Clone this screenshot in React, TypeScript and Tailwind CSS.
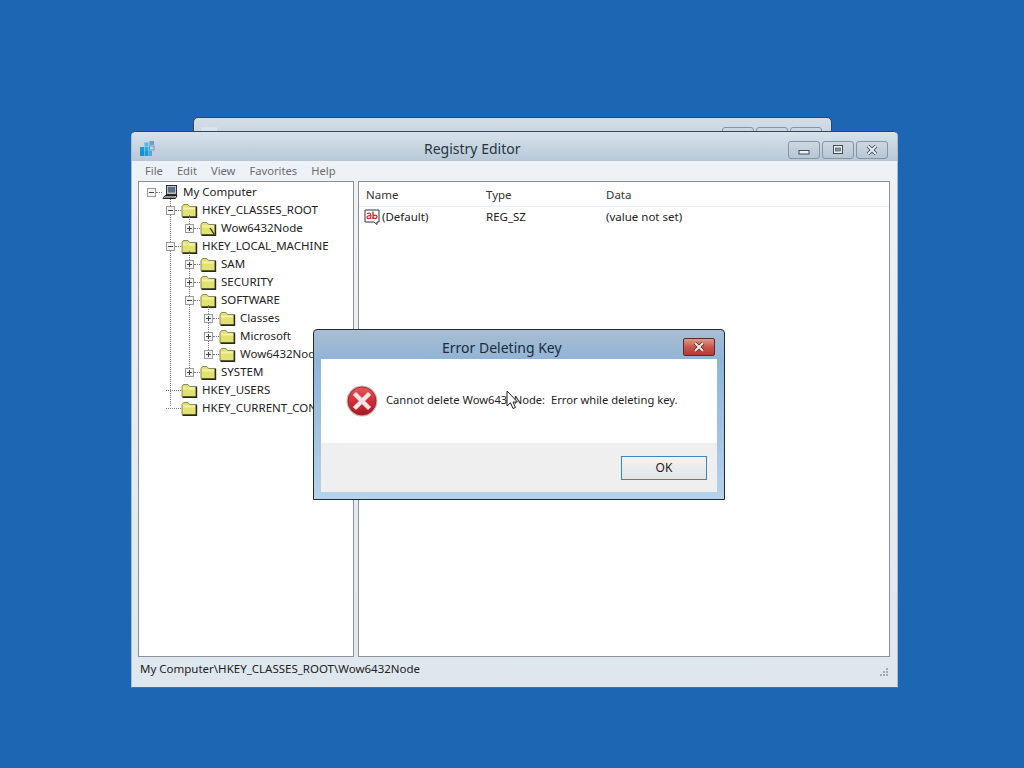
import React from "react";

const Folder = ({ open = false }: { open?: boolean }) => (
  <svg width="17" height="15" viewBox="0 0 17 15" className="shrink-0">
    <path d="M1 3.5 L2.5 1.5 H7 L8.5 3.5 H15 V13.5 H1 Z" fill="#e2e26e" stroke="#8a8a5a" strokeWidth="1" />
    <path d="M2 4.5 H14 V6.5 H2 Z" fill="#f2f2ac" />
    <path d="M15.5 3.5 V14.2 H1.5" fill="none" stroke="#2a2a1c" strokeWidth="1.4" />
    {open && <path d="M10 7 L14 13" stroke="#222" strokeWidth="1.2" />}
  </svg>
);

const Box = ({ plus }: { plus?: boolean }) => (
  <svg width="9" height="9" viewBox="0 0 9 9" className="shrink-0 relative">
    <rect x="0.5" y="0.5" width="8" height="8" fill="#f4f4f4" stroke="#9a9a9a" />
    <path d="M2 4.5 H7" stroke="#444" />
    {plus && <path d="M4.5 2 V7" stroke="#444" />}
  </svg>
);

type RowProps = { pl: string; label: string; kind?: "plus" | "minus" | "none"; open?: boolean };
const Row = ({ pl, label, kind = "plus", open }: RowProps) => (
  <div className={`flex items-center h-[18px] whitespace-nowrap ${pl}`}>
    {kind === "none" ? (
      <div className="w-[15px] border-t border-dotted border-[#777] shrink-0" />
    ) : (
      <>
        <Box plus={kind === "plus"} />
        <div className="w-[6px] border-t border-dotted border-[#777] shrink-0" />
      </>
    )}
    <Folder open={open} />
    <span className="ml-[4px] -mt-[1px]">{label}</span>
  </div>
);

const Computer = () => (
  <svg width="16" height="15" viewBox="0 0 16 15" className="shrink-0">
    <rect x="4.5" y="0.5" width="10" height="9" fill="#b9c0c8" stroke="#2d2d2d" />
    <rect x="6" y="2" width="7" height="5.5" fill="#5d6f86" />
    <path d="M3 10.5 H15 L13.5 13.5 H1 Z" fill="#d8d8d8" stroke="#222" />
    <path d="M3 12 H13" stroke="#555" />
  </svg>
);

const AppIcon = () => (
  <svg width="16" height="16" viewBox="0 0 16 16" className="shrink-0">
    <rect x="0" y="6" width="4" height="4" fill="#1d9ad6" />
    <rect x="0" y="10" width="4" height="5" fill="#1c8fca" />
    <rect x="4.5" y="6" width="4" height="4" fill="#29a9df" />
    <rect x="4.5" y="10" width="4" height="5" fill="#1d9ad6" />
    <rect x="9" y="10" width="3" height="5" fill="#39b0e0" />
    <rect x="4.5" y="1.5" width="4" height="4" fill="#4bb8e4" />
    <rect x="9.5" y="0" width="4.5" height="4" fill="#6a9fbd" />
    <rect x="9.5" y="5" width="4.5" height="4" fill="none" stroke="#5f9fc0" />
  </svg>
);

const AbIcon = () => (
  <svg width="17" height="17" viewBox="0 0 17 17" className="shrink-0">
    <path d="M1 1 H15 V13 H13 V15.5 L10 13 H1 Z" fill="#fff" stroke="#333" />
    <path d="M3 4.8 C4.5 3.8 6.8 4 6.8 6 V10 M6.8 6.8 C4.5 6.4 2.8 7.2 3 8.6 C3.3 10 5.8 10 6.8 8.4" fill="none" stroke="#c02a2a" strokeWidth="1.2" />
    <path d="M9 2.5 V10 M9 7.5 C9.5 5.5 13 5.5 13 7.8 C13 10 9.5 10 9 8.2" fill="none" stroke="#c02a2a" strokeWidth="1.3" />
  </svg>
);

const ErrorIcon = () => (
  <svg width="32" height="32" viewBox="0 0 32 32" className="shrink-0">
    <defs>
      <linearGradient id="eg" x1="0" y1="0" x2="0" y2="1">
        <stop offset="0" stopColor="#e8565c" />
        <stop offset="0.55" stopColor="#cf2a33" />
        <stop offset="1" stopColor="#a81c24" />
      </linearGradient>
    </defs>
    <circle cx="16" cy="16" r="15.5" fill="#c8b6b6" />
    <circle cx="16" cy="16" r="14" fill="url(#eg)" stroke="#8e2328" strokeWidth="0.8" />
    <path d="M10 10 L22 22 M22 10 L10 22" stroke="#f4e6e6" strokeWidth="4.4" strokeLinecap="square" />
  </svg>
);

const Cap = ({ kind }: { kind: "min" | "max" | "close" }) => (
  <div className="w-[32px] h-[18px] rounded-[3px] border border-[#8595a4] bg-gradient-to-b from-[#cdd8e2] to-[#b6c6d4] flex items-center justify-center">
    <svg width="14" height="10" viewBox="0 0 14 10">
      {kind === "min" && <rect x="2" y="5.5" width="10" height="3.5" fill="#eef2f5" stroke="#3f4b57" />}
      {kind === "max" && (
        <>
          <rect x="2.5" y="0.5" width="9" height="8" fill="#eef2f5" stroke="#3f4b57" />
          <rect x="4.5" y="3" width="5" height="3" fill="#8f9ead" stroke="#3f4b57" strokeWidth="0.7" />
        </>
      )}
      {kind === "close" && (
        <>
          <path d="M3 1 L11 9 M11 1 L3 9" stroke="#3f4b57" strokeWidth="3.6" />
          <path d="M3 1 L11 9 M11 1 L3 9" stroke="#eef2f5" strokeWidth="1.8" />
        </>
      )}
    </svg>
  </div>
);

export default function App() {
  return (
    <div
      className="relative w-[1024px] h-[768px] overflow-hidden bg-[#1d66b3] text-[11.5px] text-[#222]"
      style={{ fontFamily: '"Noto Sans", "Open Sans", sans-serif' }}
    >
      {/* Window behind */}
      <div className="absolute left-[193px] top-[117px] w-[639px] h-[40px] rounded-t-[5px] border border-[#33465a] bg-gradient-to-b from-[#d4dee7] to-[#b6c8d8] flex justify-end gap-[2px] pr-[9px] pt-[9px]">
        <div className="absolute left-[7px] top-[9px] w-[16px] h-[8px] bg-[#dbe3ea]" />
        <Cap kind="min" />
        <Cap kind="max" />
        <Cap kind="close" />
      </div>

      {/* Main window */}
      <div className="absolute left-[131px] top-[131px] w-[767px] h-[557px] rounded-t-[5px] border border-t-[#33465a] border-x-[#a8bccd] border-b-[#3d6f9f] flex flex-col bg-[#e3e9ef]">
        <div className="h-[29px] flex items-start shrink-0 pl-[8px] pt-[9px] rounded-t-[4px] bg-gradient-to-b from-[#d8e2ea] to-[#b6c8d8]">
          <AppIcon />
          <span className="ml-[268px] -mt-[2px] text-[14px] leading-[20px] text-[#2a3340]">Registry Editor</span>
          <div className="ml-auto flex gap-[2px] pr-[9px]">
            <Cap kind="min" />
            <Cap kind="max" />
            <Cap kind="close" />
          </div>
        </div>
        <div className="flex-1 flex flex-col bg-gradient-to-b from-[#eef2f6] to-[#dfe7ee] min-h-0">
          <div className="h-[20px] flex items-center gap-[14px] pl-[13px] text-[11.2px] text-[#6c6c6c] shrink-0">
            <span>File</span>
            <span>Edit</span>
            <span>View</span>
            <span>Favorites</span>
            <span>Help</span>
          </div>
          <div className="flex-1 flex gap-[4px] pl-[6px] pr-[7px] min-h-0">
            {/* Tree */}
            <div className="relative w-[216px] border border-[#8d9197] bg-white pt-px overflow-hidden">
              <svg className="absolute inset-0 w-full h-full pointer-events-none" fill="none" stroke="#777" strokeDasharray="1 1">
                <path d="M31.5 15 V225" />
                <path d="M50.5 33 V46" />
                <path d="M50.5 69 V190" />
                <path d="M69.5 123 V172" />
              </svg>
              <div className="flex items-center h-[18px] pl-[8px] whitespace-nowrap">
                <Box />
                <div className="w-[6px] border-t border-dotted border-[#777]" />
                <Computer />
                <span className="ml-[5px] -mt-[1px]">My Computer</span>
              </div>
              <Row pl="pl-[27px]" label="HKEY_CLASSES_ROOT" kind="minus" />
              <Row pl="pl-[46px]" label="Wow6432Node" open />
              <Row pl="pl-[27px]" label="HKEY_LOCAL_MACHINE" kind="minus" />
              <Row pl="pl-[46px]" label="SAM" />
              <Row pl="pl-[46px]" label="SECURITY" />
              <Row pl="pl-[46px]" label="SOFTWARE" kind="minus" />
              <Row pl="pl-[65px]" label="Classes" />
              <Row pl="pl-[65px]" label="Microsoft" />
              <Row pl="pl-[65px]" label="Wow6432Node" />
              <Row pl="pl-[46px]" label="SYSTEM" />
              <Row pl="pl-[27px]" label="HKEY_USERS" kind="none" />
              <Row pl="pl-[27px]" label="HKEY_CURRENT_CONFIG" kind="none" />
            </div>
            {/* List */}
            <div className="flex-1 border border-[#8d9197] bg-white">
              <div className="grid grid-cols-[120px_120px_1fr] h-[25px] items-center pl-[7px] pt-[2px] border-b border-[#e9eef3] text-[#333]">
                <span>Name</span>
                <span>Type</span>
                <span>Data</span>
              </div>
              <div className="grid grid-cols-[120px_120px_1fr] h-[20px] items-center pl-[6px]">
                <span className="flex items-center gap-px -ml-px">
                  <AbIcon />
                  <span>(Default)</span>
                </span>
                <span className="ml-px">REG_SZ</span>
                <span className="ml-px">(value not set)</span>
              </div>
            </div>
          </div>
          <div className="h-[30px] flex items-center justify-between pl-[8px] pr-[8px] pb-[6px] shrink-0">
            <span>My Computer\HKEY_CLASSES_ROOT\Wow6432Node</span>
            <svg width="9" height="10" viewBox="0 0 9 10" fill="#a3abb2" className="mt-[8px]">
              <rect x="6" y="0" width="2" height="2" />
              <rect x="3" y="3" width="2" height="2" />
              <rect x="6" y="3" width="2" height="2" />
              <rect x="0" y="6" width="2" height="2" />
              <rect x="3" y="6" width="2" height="2" />
              <rect x="6" y="6" width="2" height="2" />
            </svg>
          </div>
        </div>
      </div>

      {/* Dialog */}
      <div className="absolute left-[313px] top-[329px] w-[412px] h-[171px] rounded-t-[4px] border border-[#1f2b38] bg-gradient-to-b from-[#a8bdd0] via-[#8fb4d8] via-[18%] to-[#b5d3ea] flex flex-col px-[7px] pb-[7px]">
        <div className="h-[29px] flex items-center shrink-0 relative">
          <span className="ml-[121px] mt-[6px] text-[14px] text-[#1f2a38]">Error Deleting Key</span>
          <div className="absolute right-[2px] top-[8px] w-[32px] h-[18px] rounded-[2px] border border-[#5a2a2a] bg-gradient-to-b from-[#e0978c] via-[#c9564c] to-[#b23a33] flex items-center justify-center">
            <svg width="14" height="10" viewBox="0 0 14 10">
              <path d="M3 1 L11 9 M11 1 L3 9" stroke="#6e2a26" strokeWidth="3.6" />
              <path d="M3 1 L11 9 M11 1 L3 9" stroke="#f7eeee" strokeWidth="1.8" />
            </svg>
          </div>
        </div>
        <div className="flex-1 flex flex-col min-h-0">
          <div className="h-[84px] bg-white flex items-center pl-[25px] shrink-0">
            <ErrorIcon />
            <span className="ml-[8px] -mt-[1px] text-[11.2px] whitespace-pre">Cannot delete Wow6432Node:  Error while deleting key.</span>
          </div>
          <div className="flex-1 bg-[#efefef] flex items-start justify-end pr-[10px] pt-[13px]">
            <button className="w-[86px] h-[24px] border border-[#3a87c0] bg-gradient-to-b from-[#f3f3f3] to-[#e4e4e4] text-[12px] text-[#222]">
              OK
            </button>
          </div>
        </div>
      </div>

      {/* Cursor */}
      <svg className="absolute left-[506px] top-[390px]" width="14" height="21" viewBox="0 0 14 21">
        <path d="M1 1 V16 L4.5 12.8 L7 18.5 L9.5 17.5 L7 12 H11.5 Z" fill="#fff" stroke="#222" strokeWidth="1" />
      </svg>
    </div>
  );
}
